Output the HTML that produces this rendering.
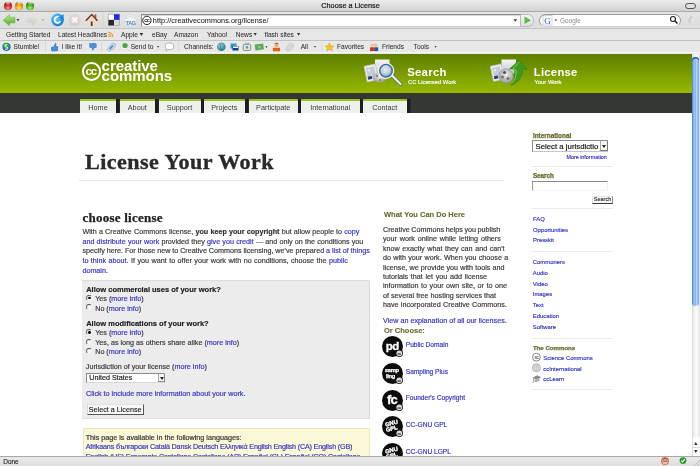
<!DOCTYPE html>
<html><head><meta charset="utf-8">
<style>
*{margin:0;padding:0;box-sizing:border-box}
html,body{width:700px;height:466px;overflow:hidden;background:#fff;font-family:"Liberation Sans",sans-serif}
body{filter:blur(0.3px)}
.a{position:absolute;white-space:nowrap}
#title{left:0;top:0;width:700px;height:12px;background:linear-gradient(#ececec,#d2d2d2);border-bottom:1px solid #a9a9a9}
#tb{left:0;top:12px;width:700px;height:17px;background:linear-gradient(#e4e4e4,#dcdcdc);border-bottom:1px solid #c4c4c4}
#bm{left:0;top:29px;width:700px;height:12px;background:#e6e6e6;border-bottom:1px solid #c2c2c2}
#sb{left:0;top:41px;width:700px;height:13px;background:#e8e8e8}
.ui{font-size:6.4px;color:#303030;-webkit-text-stroke:0.05px #303030}
#hdr{left:0;top:53.5px;width:692px;height:39.5px;background:linear-gradient(#5d7e00,#98b900)}
#dark{left:0;top:93px;width:692px;height:20px;background:#343833}
.tab{position:absolute;top:98.9px;height:14.3px;background:#eef0ec;border-top:2px solid #9cbf1a;font-size:7.25px;color:#3a3a3a;text-align:center;line-height:14.3px;box-shadow:3.5px 0 0 #1c1e1b}
.body{font-size:7.2px;color:#3a3a3a;line-height:9.6px;-webkit-text-stroke:0.18px currentColor}
.sideh{font-size:6.5px;font-weight:bold;color:#67692c;-webkit-text-stroke:0.25px currentColor}
.side{font-size:6.5px;color:#3030c4;-webkit-text-stroke:0.15px currentColor}
.sep{position:absolute;left:531px;width:82px;height:1px;background:#ececec}
#scroll{left:692px;top:53.5px;width:8px;height:402.5px;background:linear-gradient(90deg,#d6d6d6,#f2f2f2 30%,#fbfbfb 60%,#e4e4e4)}
#thumb{left:692.4px;top:57px;width:7px;height:249px;border-radius:3.5px;background:linear-gradient(90deg,#4a7cd8,#9ec8f8 30%,#80b0f0 45%,#b4d8fc 65%,#6a9ce6);box-shadow:inset 0 1.5px 0 #2050b0}
#status{left:0;top:455.8px;width:700px;height:10.2px;background:linear-gradient(#e9e9e9,#dedede);border-top:1px solid #a8a8a8}
.lnk,.body .lnk,.body.lnk{color:#3535c5}
.radio{width:6px;height:6px;border-radius:50%;background:#f8f8f8;border:0.9px solid #f0f0f0;border-top-color:#505050;border-left-color:#6a6a6a}
.radio.on::after{content:"";position:absolute;left:1.3px;top:1.1px;width:2.3px;height:2.3px;border-radius:50%;background:#111}
</style></head><body>

<!-- title bar -->
<div id="title" class="a"></div>
<div class="a" style="left:4px;top:1.6px;width:8px;height:8px;border-radius:50%;background:radial-gradient(circle at 50% 75%,#ff9a84 0,#d03030 40%,#a01818 70%,#5a0a0a 100%);box-shadow:0 0.3px 0.6px rgba(0,0,0,.35)"></div>
<div class="a" style="left:5.6px;top:2.2px;width:4.8px;height:2.6px;border-radius:50%;background:linear-gradient(rgba(255,255,255,.85),rgba(255,255,255,.1))"></div>
<div class="a" style="left:15.2px;top:1.6px;width:8px;height:8px;border-radius:50%;background:radial-gradient(circle at 50% 75%,#fff080 0,#f0a010 40%,#c07008 70%,#6a3a04 100%);box-shadow:0 0.3px 0.6px rgba(0,0,0,.35)"></div>
<div class="a" style="left:16.8px;top:2.2px;width:4.8px;height:2.6px;border-radius:50%;background:linear-gradient(rgba(255,255,255,.85),rgba(255,255,255,.1))"></div>
<div class="a" style="left:26.4px;top:1.6px;width:8px;height:8px;border-radius:50%;background:radial-gradient(circle at 50% 75%,#b8f080 0,#50b020 40%,#2a8010 70%,#164a06 100%);box-shadow:0 0.3px 0.6px rgba(0,0,0,.35)"></div>
<div class="a" style="left:28.0px;top:2.2px;width:4.8px;height:2.6px;border-radius:50%;background:linear-gradient(rgba(255,255,255,.85),rgba(255,255,255,.1))"></div>
<div class="a" style="left:321.3px;top:0.6px;font-size:7.3px;color:#1a1a1a;line-height:10px;-webkit-text-stroke:0.2px #1a1a1a">Choose a License</div>
<div class="a" style="left:685px;top:3px;width:11px;height:6px;border:1px solid #555;border-radius:3px;background:#e0e0e0"></div>

<!-- toolbar -->
<div id="tb" class="a"></div>
<div id="bm" class="a"></div>
<div id="sb" class="a"></div>

<!-- url field -->
<div class="a" style="left:140.8px;top:13.7px;width:380px;height:13px;background:#fff;border:1px solid #8e8e8e;border-bottom-color:#cfcfcf;border-right-color:#b8b8b8;box-shadow:inset 0 1px 0 #d8d8d8"></div>
<div class="a" style="left:152.8px;top:15.2px;font-size:7.25px;line-height:11px;color:#1a1a1a;-webkit-text-stroke:0.05px #1a1a1a;letter-spacing:0.05px">http://creativecommons.org/license/</div>
<div class="a" style="left:521px;top:13.7px;width:13px;height:13px;background:linear-gradient(#f4f4f4,#dedede);border:1px solid #bdbdbd;border-left:none;border-radius:0 6px 6px 0"></div>
<div class="a" style="left:539px;top:13.7px;width:142px;height:13px;background:#fff;border:1px solid #9a9a9a;border-bottom-color:#d0d0d0;border-radius:6.5px"></div>
<div class="a" style="left:560px;top:15px;font-size:6.5px;line-height:11px;color:#8a8a8a">Google</div>
<svg class="a" style="left:0;top:0" width="700" height="54" viewBox="0 0 700 54">
<defs>
<linearGradient id="gback" x1="0" y1="0" x2="0" y2="1"><stop offset="0" stop-color="#b6ea8a"/><stop offset="1" stop-color="#4eae2c"/></linearGradient>
<linearGradient id="gfwd" x1="0" y1="0" x2="0" y2="1"><stop offset="0" stop-color="#e4e8e2"/><stop offset="1" stop-color="#c6ccc4"/></linearGradient>
<radialGradient id="greload" cx="0.4" cy="0.35" r="0.7"><stop offset="0" stop-color="#6cd0ff"/><stop offset="1" stop-color="#0a74cc"/></radialGradient>
<radialGradient id="gstop" cx="0.5" cy="0.4" r="0.6"><stop offset="0" stop-color="#ece4e4"/><stop offset="1" stop-color="#d2c8c8"/></radialGradient>
<radialGradient id="gstum" cx="0.5" cy="0.3" r="0.7"><stop offset="0" stop-color="#40c848"/><stop offset="0.45" stop-color="#20a030"/><stop offset="0.6" stop-color="#2a78c8"/><stop offset="1" stop-color="#1a4a9a"/></radialGradient>
</defs>
<path d="M3 20.2 L9.5 14.5 L9.5 17.3 L15 17.3 L15 23 L9.5 23 L9.5 25.8 Z" fill="url(#gback)" stroke="#5aa83a" stroke-width="0.4"/>
<path d="M16.4 19 h3.2 l-1.6 2.2 z" fill="#444"/><path d="M38.6 20.2 L32 14.5 L32 17.3 L26.8 17.3 L26.8 23 L32 23 L32 25.8 Z" fill="url(#gfwd)"/>
<path d="M41.4 19 h2.9 l-1.45 2 z" fill="#aaa"/><circle cx="57.6" cy="19.9" r="6.3" fill="url(#greload)"/>
<path d="M60.2 18.4 A3 3 0 1 0 60.3 21.2" fill="none" stroke="#fff" stroke-width="1.7"/>
<path d="M57.5 17.6 L63.8 14.2 L63.2 19.9 Z" fill="#1a8ad8"/>
<circle cx="74.7" cy="20" r="6" fill="url(#gstop)"/>
<path d="M72.3 17.6 L77.1 22.4 M77.1 17.6 L72.3 22.4" stroke="#fafafa" stroke-width="1.5"/>
<path d="M88 20 L88 26 L95.5 26 L95.5 20 L91.7 16.5 Z" fill="#f0dcc0"/>
<path d="M85.8 20.8 L91.7 14.6 L97.5 20.8" fill="none" stroke="#6a3a22" stroke-width="1.5"/>
<rect x="94.5" y="14.5" width="1.8" height="3.5" fill="#c83a1a"/>
<rect x="90.8" y="21.5" width="1.8" height="4.5" fill="#5a3a2a"/>
<rect x="102.5" y="13" width="0.8" height="14" fill="#d0d0d0"/>
<rect x="108.2" y="14.1" width="11.5" height="11.5" fill="#ddd"/><rect x="108.2" y="14.1" width="5.75" height="5.75" fill="#fff"/><rect x="113.95" y="14.1" width="5.75" height="5.75" fill="#2626ee"/><rect x="108.2" y="19.85" width="5.75" height="5.75" fill="#262626"/><rect x="108.2" y="14.1" width="11.5" height="11.5" fill="none" stroke="#888" stroke-width="0.5"/>
<circle cx="130.7" cy="20.2" r="5.7" fill="#f2f2f2" stroke="#d0d0d0" stroke-width="0.6"/>
<path d="M126 19 Q130.7 13.5 135.5 19" fill="none" stroke="#c8c8c8" stroke-width="0.6"/><text x="130.8" y="25.2" font-family="Liberation Sans" font-size="5.2" fill="#3a78b8" text-anchor="middle" letter-spacing="-0.2" stroke="#3a78b8" stroke-width="0.15">TAG</text>
<circle cx="146.9" cy="20.4" r="4.2" fill="#fff" stroke="#222" stroke-width="1"/>
<text x="146.8" y="22.1" font-family="Liberation Sans" font-size="5.4" font-weight="bold" fill="#222" text-anchor="middle" letter-spacing="-0.5">cc</text>
<path d="M513.5 19.2 h3.6 l-1.8 2.6 z" fill="#333"/><path d="M524.5 16.5 L531 20.2 L524.5 24 Z" fill="#50c040"/>
<rect x="543" y="15.5" width="9" height="9.5" fill="#fff" stroke="#9ab" stroke-width="0.5"/>
<text x="547.5" y="23.5" font-family="Liberation Serif" font-size="9" fill="#2a5adc" text-anchor="middle">G</text>
<path d="M554.6 19.5 h2.4 l-1.2 1.8 z" fill="#333"/><circle cx="673" cy="19" r="2.5" fill="none" stroke="#222" stroke-width="1.1"/><path d="M674.8 20.8 L677.5 23.5" stroke="#222" stroke-width="1.6"/>
<path d="M692 16.5 L689 19.5 L690 23" fill="none" stroke="#c8c8c8" stroke-width="1.4"/>
<path d="M108.3 32.3 A4.6 4.6 0 0 1 112.9 36.9" fill="none" stroke="#f09a30" stroke-width="1.2"/><path d="M108.3 34.4 A2.5 2.5 0 0 1 110.8 36.9" fill="none" stroke="#f09a30" stroke-width="1.1"/><circle cx="108.9" cy="36.4" r="0.8" fill="#f09a30"/>
<path d="M139.6 33 h3.6 l-1.8 3 z" fill="#333"/><path d="M253.6 33 h3.2 l-1.6 2.8 z" fill="#333"/><path d="M297 33 h3.2 l-1.6 2.8 z" fill="#333"/><circle cx="6.5" cy="46.8" r="4.1" fill="url(#gstum)"/><path d="M7.2 44.6 Q4.6 44.4 4.8 46 Q5 47.2 6.8 47.2 Q8.3 47.4 7.9 48.6 Q7.5 49.6 5 49.2" fill="none" stroke="#fff" stroke-width="1"/>
<rect x="45" y="41.5" width="0.8" height="11" fill="#d4d4d4"/>
<path d="M51 47 L53.5 46.5 L55.3 42.8 L56.5 43.5 L56 46 L58.2 46.5 L58 51 L52 51.4 L51 50 Z" fill="#4a8ad0"/>
<path d="M89 43.2 L95.5 43 L96.8 44.5 L96.5 47.8 L94.2 48.2 L93.2 50.6 L92 50.4 L92 48.2 L89.5 47.8 Z" fill="#4a8ed6"/>
<rect x="101.2" y="41.5" width="0.8" height="11" fill="#d4d4d4"/>
<path d="M107 49.5 L112.5 43 L115.7 44 L115 47.5 L109.5 51.5 Z" fill="#cfd8e6" stroke="#8a9ab0" stroke-width="0.5"/><path d="M109 48.5 L112.5 45 L113.5 46 L110.5 49.5 Z" fill="#2a8ae8"/>
<path d="M120 45.5 L123 43.5 L127.5 44 L127.5 49.5 L122 51 Z" fill="#f0f0f0" stroke="#ccc" stroke-width="0.4"/><circle cx="125" cy="45.5" r="2.6" fill="#4aa83a"/>
<path d="M156.8 46 h2.4 l-1.2 1.8 z" fill="#444"/><ellipse cx="169.5" cy="46.3" rx="4.3" ry="3.4" fill="#fff" stroke="#888" stroke-width="0.6"/><path d="M166.5 48.8 L165.8 51 L168.5 49.5" fill="#fff" stroke="#888" stroke-width="0.5"/>
<rect x="178.3" y="41.5" width="0.8" height="11" fill="#d4d4d4"/>
<radialGradient id="gglobe" cx="0.4" cy="0.35" r="0.7"><stop offset="0" stop-color="#9ad8e0"/><stop offset="1" stop-color="#1a6a8a"/></radialGradient><circle cx="221.3" cy="46.8" r="4.3" fill="url(#gglobe)"/><path d="M219.5 44 Q221.5 45.5 220.5 47.5 Q221 49.5 222.5 50" fill="none" stroke="#2a7a6a" stroke-width="0.9"/>
<rect x="230.5" y="43.5" width="6" height="5" fill="#2a9ad0"/><rect x="232.5" y="46" width="6" height="4.5" fill="#1a3a8a"/><rect x="233" y="46.5" width="5" height="1.5" fill="#fff"/>
<rect x="243.3" y="44.3" width="7.4" height="6.2" rx="1.2" fill="#e8e4d0" stroke="#777" stroke-width="0.8"/><circle cx="247" cy="47.4" r="1.3" fill="#3aa8c8"/><path d="M245 42.5 L247 44.3 L249 42.5" fill="none" stroke="#777" stroke-width="0.6"/>
<rect x="255" y="44" width="8.6" height="6" fill="#5aaa5a" transform="rotate(-8 259 47)"/><circle cx="259.3" cy="47" r="1.5" fill="#8acc8a"/>
<path d="M265.3 46.2 h2.2 l-1.1 1.8 z" fill="#333"/><circle cx="276.5" cy="45" r="2.2" fill="#e8b070"/><path d="M274.2 43.8 Q276.5 41.5 278.8 43.8" fill="#9a4a1a"/><rect x="272.9" y="47.8" width="7.1" height="3.5" fill="#e86010"/>
<path d="M285 49 L290 43 L293.6 44.5 L293 48 L288 51.5 Z" fill="#d8d8d8" stroke="#bbb" stroke-width="0.5"/>
<path d="M313.8 46 h2.4 l-1.2 1.8 z" fill="#444"/><rect x="321.5" y="41.5" width="0.8" height="11" fill="#d4d4d4"/>
<path d="M329.5 42.8 L330.8 45.7 L334 46 L331.6 48 L332.4 51.2 L329.5 49.5 L326.6 51.2 L327.4 48 L325 46 L328.2 45.7 Z" fill="#f8c020" stroke="#d89a10" stroke-width="0.4"/>
<circle cx="372.3" cy="45.3" r="1.8" fill="#f0c090"/><circle cx="375.8" cy="45.3" r="1.8" fill="#f0c090"/><rect x="370" y="47.3" width="4.2" height="3.8" fill="#d83020"/><rect x="374.2" y="47.3" width="4" height="3.8" fill="#2050c0"/>
<path d="M434.4 46 h2.4 l-1.2 1.8 z" fill="#444"/></svg>
<!-- bookmarks -->
<div class="a ui" style="left:6px;top:29.88px;font-size:6.6px;line-height:9px;">Getting Started</div>
<div class="a ui" style="left:58px;top:29.88px;font-size:6.6px;line-height:9px;">Latest Headlines</div>
<div class="a ui" style="left:121px;top:29.88px;font-size:6.6px;line-height:9px;">Apple</div>
<div class="a ui" style="left:152px;top:29.88px;font-size:6.6px;line-height:9px;">eBay</div>
<div class="a ui" style="left:174px;top:29.88px;font-size:6.6px;line-height:9px;">Amazon</div>
<div class="a ui" style="left:207px;top:29.88px;font-size:6.6px;line-height:9px;">Yahoo!</div>
<div class="a ui" style="left:235.7px;top:29.88px;font-size:6.6px;line-height:9px;">News</div>
<div class="a ui" style="left:264.6px;top:29.88px;font-size:6.6px;line-height:9px;">flash sites</div>
<!-- stumble bar -->
<div class="a ui" style="left:13.6px;top:41.88px;font-size:6.6px;line-height:9px;">Stumble!</div>
<div class="a ui" style="left:61.6px;top:41.88px;font-size:6.6px;line-height:9px;">I like it!</div>
<div class="a ui" style="left:130.7px;top:41.88px;font-size:6.6px;line-height:9px;">Send to</div>
<div class="a ui" style="left:184px;top:41.88px;font-size:6.6px;line-height:9px;">Channels:</div>
<div class="a ui" style="left:300.7px;top:41.88px;font-size:6.6px;line-height:9px;">All</div>
<div class="a ui" style="left:337px;top:41.88px;font-size:6.6px;line-height:9px;">Favorites</div>
<div class="a ui" style="left:382px;top:41.88px;font-size:6.6px;line-height:9px;">Friends</div>
<div class="a ui" style="left:413.6px;top:41.88px;font-size:6.6px;line-height:9px;">Tools</div>
<div class="a" style="left:0;top:52.4px;width:700px;height:1.1px;background:#f6f6f6"></div>
<!-- header -->
<div id="hdr" class="a"></div>
<div id="dark" class="a"></div>
<!-- cc logo -->
<div class="a" style="left:82.2px;top:62.4px;width:18.5px;height:18.7px;border:2.2px solid #fff;border-radius:50%"></div>
<div class="a" style="left:85.4px;top:66px;font:bold 11.5px/10px 'Liberation Sans',sans-serif;color:#fff;letter-spacing:-1.1px">cc</div>
<div class="a" style="left:101.6px;top:60.7px;font:bold 15px/10px 'Liberation Sans',sans-serif;color:#fff;letter-spacing:-0.05px">creative</div>
<div class="a" style="left:101.6px;top:70.6px;font:bold 15px/10px 'Liberation Sans',sans-serif;color:#fff;letter-spacing:-0.05px">commons</div>
<!-- header icons -->
<svg class="a" style="left:362px;top:55px" width="44" height="34" viewBox="362 55 44 34">
 <defs>
  <linearGradient id="docg" x1="0" y1="0" x2="0" y2="1"><stop offset="0" stop-color="#f4f4f6"/><stop offset="1" stop-color="#c8c8cc"/></linearGradient>
  <radialGradient id="lens" cx="0.45" cy="0.4" r="0.6"><stop offset="0" stop-color="#e8f0f4"/><stop offset="0.7" stop-color="#b8ccd8"/><stop offset="1" stop-color="#7fa0b8"/></radialGradient>
  <radialGradient id="reel" cx="0.5" cy="0.4" r="0.6"><stop offset="0" stop-color="#f0f0f0"/><stop offset="1" stop-color="#9a9a9a"/></radialGradient>
 </defs>
 <rect x="375" y="59.5" width="14.5" height="16" fill="url(#docg)"/>
 <g transform="rotate(-12 371 73)"><rect x="365.5" y="65" width="11.5" height="16" fill="#eeeef2" stroke="#c0c0c8" stroke-width="0.6"/><rect x="367" y="67" width="8.5" height="12" fill="#c4ccd8"/><rect x="367" y="76" width="4" height="3" fill="#2a3a7a"/><circle cx="369.5" cy="70" r="1.3" fill="#e8e8d0"/></g>
 <ellipse cx="379.5" cy="77.5" rx="6.8" ry="5" fill="url(#reel)"/><circle cx="377" cy="76" r="1.2" fill="#888"/><circle cx="380" cy="80" r="1.2" fill="#888"/>
 <line x1="392" y1="75.5" x2="400.5" y2="84" stroke="#606868" stroke-width="3.6" stroke-linecap="round"/>
 <line x1="392" y1="75.5" x2="400.5" y2="84" stroke="#e8ecef" stroke-width="2.2" stroke-linecap="round"/>
 <circle cx="386" cy="70.7" r="8.2" fill="#f2f4f6"/>
 <circle cx="386" cy="70.7" r="7" fill="#3f6aa0"/>
 <circle cx="386" cy="70.7" r="5.6" fill="url(#lens)"/>
</svg>
<svg class="a" style="left:488px;top:55px" width="44" height="34" viewBox="488 55 44 34">
 <rect x="501.5" y="59.5" width="14.5" height="14" fill="url(#docg)"/>
 <g transform="rotate(-12 497 73)"><rect x="491.8" y="65" width="11" height="15.5" fill="#eeeef2" stroke="#c0c0c8" stroke-width="0.6"/><rect x="493.2" y="67" width="8" height="11.5" fill="#c4ccd8"/><rect x="493.2" y="75.5" width="4" height="3" fill="#2a3a7a"/><circle cx="495.5" cy="70" r="1.3" fill="#e8e8d0"/></g>
 <circle cx="506" cy="76" r="7.2" fill="url(#reel)" stroke="#8a8a8a" stroke-width="0.5"/>
 <circle cx="504.5" cy="72.5" r="1.6" fill="#555"/><circle cx="502.5" cy="77" r="1.6" fill="#777"/><circle cx="508" cy="78.5" r="1.6" fill="#777"/>
 <path d="M510.5 85.5 C514.5 82 515 76 514.5 69 L509.5 69 L518.7 60.5 L527.5 69 L522.5 69 C523 77 518 83 510.5 85.5 Z" fill="#3c9a1c" stroke="#2a7a10" stroke-width="0.5"/>
 <path d="M512 83 C515.5 80 516.5 75 516 70 L512 70 L518.7 62.5" fill="none" stroke="#7ed25a" stroke-width="1"/>
</svg>
<!-- search -->
<div class="a" style="left:407.2px;top:66px;font:bold 11.3px/12px 'Liberation Sans',sans-serif;color:#fff;letter-spacing:0.3px">Search</div>
<div class="a" style="left:408px;top:78px;font:5.8px/8px 'Liberation Sans',sans-serif;color:#fff;-webkit-text-stroke:0.15px #fff">CC Licensed Work</div>
<div class="a" style="left:533.8px;top:66px;font:bold 11.3px/12px 'Liberation Sans',sans-serif;color:#fff;letter-spacing:0.25px">License</div>
<div class="a" style="left:534.5px;top:78px;font:5.85px/8px 'Liberation Sans',sans-serif;color:#fff;-webkit-text-stroke:0.15px #fff">Your Work</div>

<div class="tab" style="left:80px;width:36px">Home</div>
<div class="tab" style="left:119.5px;width:35.5px">About</div>
<div class="tab" style="left:158.5px;width:42px">Support</div>
<div class="tab" style="left:203.5px;width:41.5px">Projects</div>
<div class="tab" style="left:248.5px;width:49.5px">Participate</div>
<div class="tab" style="left:301px;width:58.5px">International</div>
<div class="tab" style="left:363px;width:43.5px">Contact</div>

<!-- content -->

<!-- main content -->
<div class="a" style="left:84.5px;top:149.5px;font:bold 21px/24px 'Liberation Serif',serif;color:#2a2a2a;letter-spacing:0.45px;transform:scaleX(1.05);transform-origin:0 0;-webkit-text-stroke:0.35px #2a2a2a">License Your Work</div>
<div class="a" style="left:79px;top:180px;width:425px;height:1px;background:#e6e6e6"></div>
<div class="a" style="left:82.4px;top:210px;font:bold 13px/15px 'Liberation Serif',serif;color:#222;letter-spacing:0.25px;-webkit-text-stroke:0.25px #222">choose license</div>
<div class="a body" style="left:82.4px;top:227.2px;line-height:9.6px"><span style="word-spacing:0.17px">With a Creative Commons license, <b style="color:#333">you keep your copyright</b> but allow people to <span class="lnk">copy</span></span><br><span style="word-spacing:0.19px"><span class="lnk">and distribute your work</span> provided they <span class="lnk">give you credit</span> — and only on the conditions you</span><br><span style="word-spacing:-0.09px">specify here. For those new to Creative Commons licensing, we've prepared <span class="lnk">a list of things</span></span><br><span style="word-spacing:0.47px"><span class="lnk">to think about</span>. If you want to offer your work with no conditions, choose the <span class="lnk">public</span></span><br><span class="lnk">domain</span>.</div>

<!-- form box -->
<div class="a" style="left:82px;top:280px;width:288px;height:139px;background:#ececec;border-top:1px solid #dcdcdc;border-right:1px solid #d8d8d8;border-bottom:1px solid #dedede"></div>
<div class="a body" style="left:86.2px;top:284.5px;font-weight:bold;font-size:7.5px;color:#222">Allow commercial uses of your work?</div>
<div class="a body" style="left:95.2px;top:294px">Yes (<span class="lnk">more info</span>)</div>
<div class="a body" style="left:95.2px;top:303.6px">No (<span class="lnk">more info</span>)</div>
<div class="a body" style="left:86.2px;top:318.8px;font-weight:bold;font-size:7.5px;color:#222">Allow modifications of your work?</div>
<div class="a body" style="left:95.2px;top:328px">Yes (<span class="lnk">more info</span>)</div>
<div class="a body" style="left:95.2px;top:337.8px">Yes, as long as others share alike (<span class="lnk">more info</span>)</div>
<div class="a body" style="left:95.2px;top:347.4px">No (<span class="lnk">more info</span>)</div>
<div class="a radio on" style="left:86.2px;top:294.8px"></div>
<div class="a radio" style="left:86.2px;top:304.4px"></div>
<div class="a radio on" style="left:86.2px;top:329.2px"></div>
<div class="a radio" style="left:86.2px;top:338.8px"></div>
<div class="a radio" style="left:86.2px;top:348.4px"></div>
<div class="a body" style="left:85.8px;top:362px">Jurisdiction of your license (<span class="lnk">more info</span>)</div>
<div class="a" style="left:86px;top:372.6px;width:79px;height:10.6px;background:#fff;border:1px solid #8a8a8a;border-right-color:#d8d8d8;border-bottom-color:#d8d8d8"></div>
<div class="a body" style="left:89.3px;top:372.9px;color:#222">United States</div>
<div class="a" style="left:157.5px;top:373.5px;width:7px;height:8.5px;background:#f4f4f4;border-left:1px solid #aaa;border-bottom:1px solid #888;border-right:1px solid #888"></div>
<div class="a" style="left:159.5px;top:376.5px;width:0;height:0;border-left:2px solid transparent;border-right:2px solid transparent;border-top:3px solid #222"></div>
<div class="a body lnk" style="left:86px;top:388.7px">Click to include more information about your work.</div>
<div class="a" style="left:86.8px;top:404.4px;width:57.6px;height:10.6px;background:#f8f8f8;border-top:0.6px solid #e0e0e0;border-left:0.6px solid #d8d8d8;border-right:1.2px solid #555;border-bottom:1.2px solid #555"></div>
<div class="a body" style="left:88.8px;top:405.2px;color:#111;line-height:9px;-webkit-text-stroke:0.1px #111">Select a License</div>

<!-- language box -->
<div class="a" style="left:83px;top:428px;width:287px;height:40px;background:#fbf8d8;border:1px solid #ebe8c0"></div>
<div class="a body" style="left:85.7px;top:432.5px;color:#333">This page is available in the following languages:</div>
<div class="a body lnk" style="left:85.7px;top:442.3px;letter-spacing:-0.17px">Afrikaans български Català Dansk Deutsch Ελληνικά English English (CA) English (GB)<br>English (US) Esperanto Castellano Castellano (AR) Español (CL) Español (CO) Castellano</div>

<!-- middle column -->
<div class="a" style="left:384px;top:209.5px;font:bold 7.5px/9px 'Liberation Sans',sans-serif;color:#67692c;-webkit-text-stroke:0.1px #67692c">What You Can Do Here</div>
<div class="a body" style="left:383px;top:224.7px;line-height:9.45px"><span style="word-spacing:-0.42px">Creative Commons helps you publish</span><br><span style="word-spacing:0.8px">your work online while letting others</span><br><span style="word-spacing:0.53px">know exactly what they can and can't</span><br><span style="word-spacing:0.24px">do with your work. When you choose a</span><br><span style="word-spacing:0.13px">license, we provide you with tools and</span><br><span style="word-spacing:0.68px">tutorials that let you add license</span><br><span style="word-spacing:0.53px">information to your own site, or to one</span><br>of several free hosting services that<br><span style="word-spacing:0.27px">have incorporated Creative Commons.</span></div>
<div class="a body lnk" style="left:383px;top:315.5px">View an explanation of all our licenses.</div>
<div class="a" style="left:384px;top:325.5px;font:bold 7.5px/9px 'Liberation Sans',sans-serif;color:#67692c;-webkit-text-stroke:0.1px #67692c">Or Choose:</div>

<!-- sidebar -->
<div class="a sideh" style="left:532.9px;top:131.68px;font-size:6.4px;line-height:8px;">International</div>
<div class="a" style="left:532px;top:140px;width:76px;height:11.5px;background:#fff;border:1px solid #8c8c8c;border-right-color:#c4c4c4;border-bottom-color:#c4c4c4"></div>
<div class="a body" style="left:535.5px;top:142.60px;font-size:7.8px;line-height:8px;color:#111">Select a jurisdictio</div>
<div class="a" style="left:600px;top:141px;width:7.5px;height:9.5px;background:#f6f6f6;border-left:1px solid #aaa;border-right:1px solid #777;border-bottom:1px solid #777"></div>
<div class="a" style="left:602.2px;top:144.5px;width:0;height:0;border-left:2px solid transparent;border-right:2px solid transparent;border-top:3px solid #222"></div>
<div class="a side" style="left:566.4px;top:153.43px;font-size:5.4px;line-height:8px;">More information</div>
<div class="sep" style="top:165.5px"></div>
<div class="a sideh" style="left:532.9px;top:171.92px;font-size:6.3px;line-height:8px;">Search</div>
<div class="a" style="left:532px;top:180.7px;width:76px;height:10.7px;background:#fff;border-top:1.5px solid #8a8a8a;border-left:1px solid #9a9a9a;border-right:1px solid #f0f0f0;border-bottom:1px solid #f4f4f4"></div>
<div class="a" style="left:592px;top:195.5px;width:20.5px;height:8.3px;background:#fafafa;border-top:0.5px solid #e4e4e4;border-left:0.5px solid #ddd;border-right:1.4px solid #8a8a8a;border-bottom:1px solid #3a3a3a"></div>
<div class="a body" style="left:593.8px;top:195.3px;font-size:5.5px;line-height:8px;color:#222;-webkit-text-stroke:0.1px #222">Search</div>
<div class="sep" style="top:207.7px"></div>
<div class="a side" style="left:533px;top:215.36px;font-size:5.9px;line-height:8px;">FAQ</div>
<div class="a side" style="left:533px;top:226.06px;font-size:5.9px;line-height:8px;">Opportunities</div>
<div class="a side" style="left:533px;top:236.46px;font-size:5.9px;line-height:8px;">Presskit</div>
<div class="sep" style="top:250.5px"></div>
<div class="a side" style="left:532.8px;top:257.86px;font-size:5.9px;line-height:8px;">Commoners</div>
<div class="a side" style="left:532.8px;top:268.71px;font-size:5.9px;line-height:8px;">Audio</div>
<div class="a side" style="left:532.8px;top:279.56px;font-size:5.9px;line-height:8px;">Video</div>
<div class="a side" style="left:532.8px;top:290.41px;font-size:5.9px;line-height:8px;">Images</div>
<div class="a side" style="left:532.8px;top:301.26px;font-size:5.9px;line-height:8px;">Text</div>
<div class="a side" style="left:532.8px;top:312.11px;font-size:5.9px;line-height:8px;">Education</div>
<div class="a side" style="left:532.8px;top:322.96px;font-size:5.9px;line-height:8px;">Software</div>
<div class="sep" style="top:337.5px"></div>
<div class="a sideh" style="left:532.9px;top:343.99px;font-size:6.1px;line-height:8px;">The Commons</div>
<div class="a side" style="left:543.3px;top:354.16px;font-size:5.9px;line-height:8px;">Science Commons</div>
<div class="a side" style="left:543.3px;top:364.76px;font-size:5.9px;line-height:8px;">ccInternational</div>
<div class="a side" style="left:543.3px;top:375.46px;font-size:5.9px;line-height:8px;">ccLearn</div>
<svg class="a" style="left:531px;top:352px" width="12" height="33" viewBox="531 352 12 33">
 <circle cx="536.4" cy="357.2" r="3.9" fill="#fff" stroke="#666" stroke-width="0.8"/>
 <text x="536.4" y="358.9" font-family="Liberation Sans" font-size="4.6" fill="#666" stroke="#666" stroke-width="0.15" text-anchor="middle" letter-spacing="-0.3">sc</text>
 <circle cx="536.4" cy="367.8" r="4" fill="#f2f2f2" stroke="#9a9a9a" stroke-width="0.7"/>
 <path d="M532.6 367.8 H540.2 M536.4 364 V371.6 M533.2 365.8 H539.6 M533.2 369.8 H539.6" stroke="#aaa" stroke-width="0.45" fill="none"/>
 <ellipse cx="536.4" cy="367.8" rx="1.9" ry="3.9" fill="none" stroke="#aaa" stroke-width="0.45"/>
 <path d="M532.3 377.8 L537.3 375.2 L541.2 377.2 L536.2 379.8 Z" fill="#8a8a8a"/>
 <path d="M533.5 378.6 L533.2 383.2" stroke="#888" stroke-width="0.8"/>
 <path d="M534.6 379.2 L536.2 380 L539.6 378.3 L539.6 380.6 L536.2 382.2 L534.6 381.4 Z" fill="#a8a8a8"/>
</svg>
<div class="sep" style="top:389.2px"></div>
<!-- license icons -->
<svg class="a" style="left:382.3px;top:335.8px" width="22" height="22" viewBox="0 0 22 22"><circle cx="10.5" cy="10.5" r="10.5" fill="#0c0c0c"/><text x="10.3" y="13.6" font-family="Liberation Sans" font-size="11.5" font-weight="bold" fill="#fff" stroke="#fff" stroke-width="0.3" text-anchor="middle" letter-spacing="-0.6">pd</text><circle cx="17.3" cy="17.3" r="3.7" fill="#111"/><circle cx="17.3" cy="17.3" r="2.9" fill="#d8d8d8"/><text x="17.3" y="18.5" font-family="Liberation Sans" font-size="3.4" font-weight="bold" fill="#111" text-anchor="middle" letter-spacing="-0.2">cc</text></svg>
<div class="a body lnk" style="left:405.8px;top:340.81px;font-size:6.6px;line-height:8px;line-height:8px">Public Domain</div>
<svg class="a" style="left:382.3px;top:362.8px" width="22" height="22" viewBox="0 0 22 22"><circle cx="10.5" cy="10.5" r="10.5" fill="#0c0c0c"/><text x="9.8" y="9.3" font-family="Liberation Sans" font-size="5.8" font-weight="bold" fill="#fff" stroke="#fff" stroke-width="0.25" text-anchor="middle" letter-spacing="-0.3">samp</text><text x="8.5" y="14.6" font-family="Liberation Sans" font-size="5.8" font-weight="bold" fill="#fff" stroke="#fff" stroke-width="0.25" text-anchor="middle" letter-spacing="-0.3">ling</text><circle cx="17.3" cy="17.3" r="3.7" fill="#111"/><circle cx="17.3" cy="17.3" r="2.9" fill="#d8d8d8"/><text x="17.3" y="18.5" font-family="Liberation Sans" font-size="3.4" font-weight="bold" fill="#111" text-anchor="middle" letter-spacing="-0.2">cc</text></svg>
<div class="a body lnk" style="left:405.8px;top:367.81px;font-size:6.6px;line-height:8px;line-height:8px">Sampling Plus</div>
<svg class="a" style="left:382.3px;top:389.5px" width="22" height="22" viewBox="0 0 22 22"><circle cx="10.5" cy="10.5" r="10.5" fill="#0c0c0c"/><text x="10" y="14.2" font-family="Liberation Sans" font-size="13" font-weight="bold" fill="#fff" stroke="#fff" stroke-width="0.3" text-anchor="middle" letter-spacing="-0.8">fc</text><circle cx="17.3" cy="17.3" r="3.7" fill="#111"/><circle cx="17.3" cy="17.3" r="2.9" fill="#d8d8d8"/><text x="17.3" y="18.5" font-family="Liberation Sans" font-size="3.4" font-weight="bold" fill="#111" text-anchor="middle" letter-spacing="-0.2">cc</text></svg>
<div class="a body lnk" style="left:405.8px;top:394.41px;font-size:6.6px;line-height:8px;line-height:8px">Founder's Copyright</div>
<svg class="a" style="left:382.3px;top:416.2px" width="22" height="22" viewBox="0 0 22 22"><circle cx="10.5" cy="10.5" r="10.5" fill="#0c0c0c"/><text x="10" y="9" font-family="Liberation Sans" font-size="5.8" font-weight="bold" fill="#fff" stroke="#fff" stroke-width="0.35" text-anchor="middle" transform="rotate(-15 10 9)">GNU</text><text x="10" y="14.6" font-family="Liberation Sans" font-size="5.8" font-weight="bold" fill="#fff" stroke="#fff" stroke-width="0.35" text-anchor="middle" transform="rotate(-15 10 14)">GPL</text><circle cx="17.3" cy="17.3" r="3.7" fill="#111"/><circle cx="17.3" cy="17.3" r="2.9" fill="#d8d8d8"/><text x="17.3" y="18.5" font-family="Liberation Sans" font-size="3.4" font-weight="bold" fill="#111" text-anchor="middle" letter-spacing="-0.2">cc</text></svg>
<div class="a body lnk" style="left:405.8px;top:421.01px;font-size:6.6px;line-height:8px;line-height:8px">CC-GNU GPL</div>
<svg class="a" style="left:382.3px;top:442.8px" width="22" height="22" viewBox="0 0 22 22"><circle cx="10.5" cy="10.5" r="10.5" fill="#0c0c0c"/><text x="10" y="9" font-family="Liberation Sans" font-size="5.8" font-weight="bold" fill="#fff" stroke="#fff" stroke-width="0.35" text-anchor="middle" transform="rotate(-15 10 9)">GNU</text><text x="10" y="14.6" font-family="Liberation Sans" font-size="5.8" font-weight="bold" fill="#fff" stroke="#fff" stroke-width="0.35" text-anchor="middle" transform="rotate(-15 10 14)">GPL</text><circle cx="17.3" cy="17.3" r="3.7" fill="#111"/><circle cx="17.3" cy="17.3" r="2.9" fill="#d8d8d8"/><text x="17.3" y="18.5" font-family="Liberation Sans" font-size="3.4" font-weight="bold" fill="#111" text-anchor="middle" letter-spacing="-0.2">cc</text></svg>
<div class="a body lnk" style="left:405.8px;top:447.71px;font-size:6.6px;line-height:8px;line-height:8px">CC-GNU LGPL</div>
<div id="scroll" class="a"></div>
<div id="thumb" class="a"></div>
<div id="status" class="a"></div>
<div class="a" style="left:692.3px;top:437px;width:7.7px;height:19px;background:#fff;border-left:1px solid #ddd"></div>
<div class="a" style="left:692.3px;top:433px;width:7.7px;height:5px;border-radius:0 0 4px 4px;background:linear-gradient(90deg,#d6d6d6,#f2f2f2 30%,#fbfbfb 60%,#e4e4e4)"></div>
<div class="a" style="left:692.3px;top:447.2px;width:7.7px;height:0.8px;background:#d8d8d8"></div>
<svg class="a" style="left:640px;top:436px" width="60" height="30" viewBox="640 436 60 30">
 <path d="M694.2 444.9 L697.4 444.9 L695.8 442 Z" fill="#222"/>
 <path d="M694.2 450 L697.4 450 L695.8 452.9 Z" fill="#222"/>
 <circle cx="665" cy="461" r="4" fill="#d87a50"/><circle cx="665" cy="461.5" r="2.6" fill="#f0c8b0"/><path d="M662.8 461.2 H667.2" stroke="#5a4a8a" stroke-width="1"/><path d="M663.2 459.5 Q665 457.5 666.8 459.5" fill="none" stroke="#9a3a10" stroke-width="0.8"/>
 <circle cx="683" cy="460.6" r="3.4" fill="#20a020"/><path d="M681.3 460.6 L682.6 461.9 L684.8 459.2" fill="none" stroke="#fff" stroke-width="1.1"/>
 <path d="M694 466 L700 460 M697 466 L700 463" stroke="#aaa" stroke-width="0.6"/>
</svg>
<div class="a" style="left:3.2px;top:457px;font-size:6.5px;line-height:9px;color:#222;-webkit-text-stroke:0.1px #222">Done</div>
</body></html>
